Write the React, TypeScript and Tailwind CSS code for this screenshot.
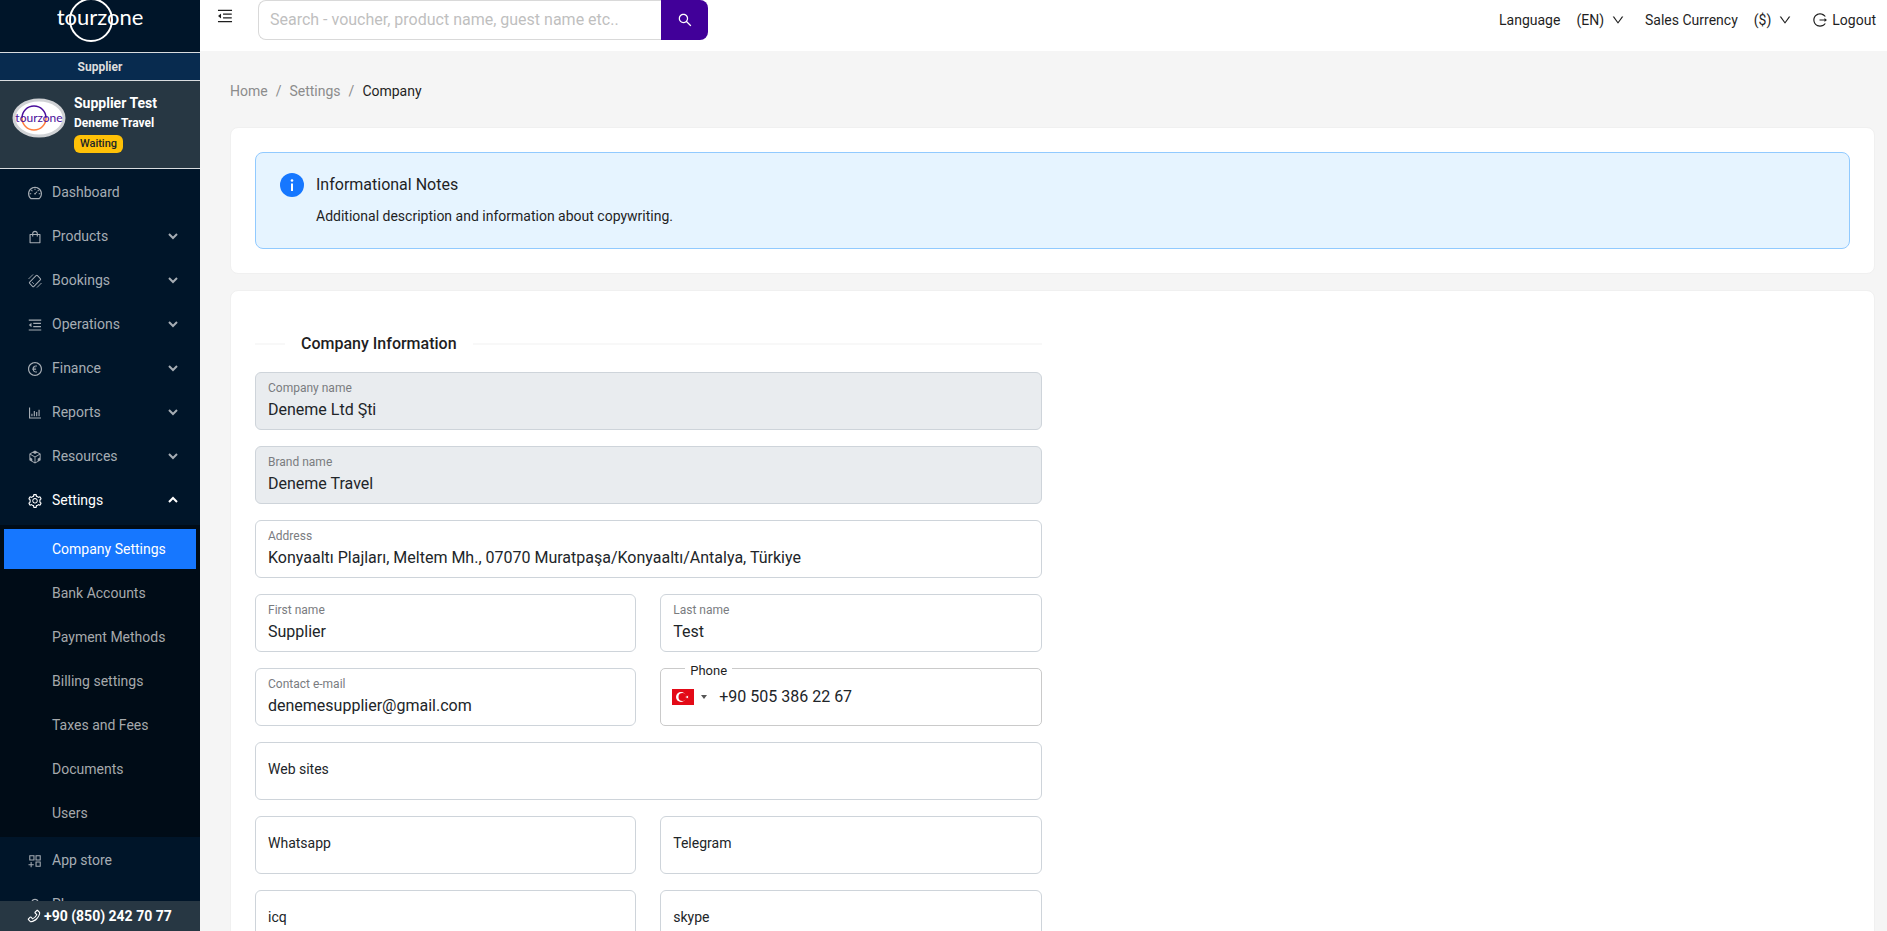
import React from "react";
import {
  AiOutlineAppstoreAdd,
  AiOutlineBarChart,
  AiOutlineCodeSandbox,
  AiOutlineDashboard,
  AiOutlineDown,
  AiOutlineEuroCircle,
  AiOutlineLogout,
  AiOutlineMenuFold,
  AiOutlinePhone,
  AiOutlineSearch,
  AiOutlineSetting,
  AiOutlineShopping,
  AiOutlineUser,
} from "react-icons/ai";
import type { IconType } from "react-icons";

interface MenuEntry {
  label: string;
  icon: IconType;
  expandable?: boolean;
  open?: boolean;
}

interface FieldProps {
  id: string;
  label: string;
  value?: string;
  disabled?: boolean;
  wide?: boolean;
}

const TicketIcon: IconType = ({ className }) => (
  <svg viewBox="0 0 32 32" className={className} fill="none" stroke="currentColor" strokeWidth="2">
    <rect x="5" y="10" width="22" height="12" rx="2" transform="rotate(-45 16 16)" />
    <path d="M3 12q1-1 3-3t3-3 3-3M20 29q1-1 3-3t3-3 3-3" />
    <path d="M10.5 18.5l3 3" />
  </svg>
);

const mainMenu: MenuEntry[] = [
  { label: "Dashboard", icon: AiOutlineDashboard },
  { label: "Products", icon: AiOutlineShopping, expandable: true },
  { label: "Bookings", icon: TicketIcon, expandable: true },
  { label: "Operations", icon: AiOutlineMenuFold, expandable: true },
  { label: "Finance", icon: AiOutlineEuroCircle, expandable: true },
  { label: "Reports", icon: AiOutlineBarChart, expandable: true },
  { label: "Resources", icon: AiOutlineCodeSandbox, expandable: true },
  { label: "Settings", icon: AiOutlineSetting, expandable: true, open: true },
];

const settingsMenu = [
  "Company Settings",
  "Bank Accounts",
  "Payment Methods",
  "Billing settings",
  "Taxes and Fees",
  "Documents",
  "Users",
];

const fields: FieldProps[] = [
  { id: "company", label: "Company name", value: "Deneme Ltd Şti", disabled: true, wide: true },
  { id: "brand", label: "Brand name", value: "Deneme Travel", disabled: true, wide: true },
  {
    id: "address",
    label: "Address",
    value: "Konyaaltı Plajları, Meltem Mh., 07070 Muratpaşa/Konyaaltı/Antalya, Türkiye",
    wide: true,
  },
  { id: "first", label: "First name", value: "Supplier" },
  { id: "last", label: "Last name", value: "Test" },
  { id: "email", label: "Contact e-mail", value: "denemesupplier@gmail.com" },
];

const contactFields: FieldProps[] = [
  { id: "web", label: "Web sites", wide: true },
  { id: "whatsapp", label: "Whatsapp" },
  { id: "telegram", label: "Telegram" },
  { id: "icq", label: "icq" },
  { id: "skype", label: "skype" },
];

const Chevron: React.FC<{ up?: boolean }> = ({ up }) => (
  <svg viewBox="0 0 10 10" className="w-[10px] h-[10px]" fill="none" stroke="currentColor" strokeWidth="2">
    <path d={up ? "M1 7l4-4 4 4" : "M1 3l4 4 4-4"} />
  </svg>
);

const Logo: React.FC = () => (
  <svg viewBox="0 0 86 42" className="w-[86px] h-[42px] shrink-0" role="img" aria-label="tourzone">
    <circle cx="34" cy="20" r="21" fill="none" stroke="#fff" strokeWidth="2" />
    <text x="43" y="25" textAnchor="middle" fontFamily="Lato, sans-serif" fontSize="22" fill="#fff">
      tourzone
    </text>
  </svg>
);

const Avatar: React.FC = () => (
  <svg viewBox="0 0 54 40" className="w-[54px] h-10 shrink-0" role="img" aria-label="tourzone">
    <ellipse cx="27" cy="20" rx="25" ry="18" fill="#fff" stroke="#d0d2d5" strokeWidth="3" />
    <path d="M10 20a12 12 0 0 1 24 0" fill="none" stroke="#4a0f9b" strokeWidth="1.5" />
    <path d="M10 20a12 12 0 0 0 24 0" fill="none" stroke="#ff7f3e" strokeWidth="1.5" />
    <text x="27" y="24" textAnchor="middle" fontFamily="Lato, sans-serif" fontSize="12" fill="#4a0f9b">
      tourzone
    </text>
  </svg>
);

const MenuItem: React.FC<MenuEntry> = ({ label, icon: Icon, expandable, open }) => (
  <button
    type="button"
    className={`flex items-center w-full h-10 my-1 pb-[2px] pl-[27px] pr-[22px] text-sm ${
      open ? "text-white" : "text-[#a6adb4]"
    }`}
  >
    <Icon className="w-4 h-4 mt-[2px] mr-[9px] shrink-0" />
    <span className="flex-1 text-left">{label}</span>
    {expandable && <Chevron up={open} />}
  </button>
);

const Sidebar: React.FC = () => (
  <aside className="flex flex-col w-[200px] shrink-0 bg-[#001529] text-white">
    <div className="flex items-start justify-center h-[52px] shrink-0 overflow-hidden">
      <Logo />
    </div>
    <div className="flex items-center justify-center h-[29px] shrink-0 border-y border-[#d9dcdf] bg-[#082b4f] text-xs font-bold text-[#dddddd]">
      Supplier
    </div>
    <div className="flex gap-2 h-[88px] shrink-0 pt-3 pl-3 bg-[#273743] border-b border-[#d9dcdf]">
      <div className="pt-[5px]">
        <Avatar />
      </div>
      <div>
        <div className="text-sm leading-[20px] font-bold">Supplier Test</div>
        <div className="text-xs leading-[20px] font-bold">Deneme Travel</div>
        <span className="flex items-center justify-center w-[49px] h-[18px] mt-[2px] rounded-[6px] bg-[#ffc107] text-[11px] font-medium text-[#212529]">
          Waiting
        </span>
      </div>
    </div>
    <nav className="flex-1 overflow-hidden">
      {mainMenu.map((entry) => (
        <MenuItem key={entry.label} {...entry} />
      ))}
      <div className="bg-[#000c17] py-1">
        {settingsMenu.map((label, i) => (
          <a
            key={label}
            href="#"
            className={`flex items-center h-10 mx-1 mb-1 last:mb-0 pl-12 pb-px text-sm ${
              i === 0 ? "bg-[#1677ff] text-white" : "text-[#a6a9ac]"
            }`}
          >
            {label}
          </a>
        ))}
      </div>
      <MenuItem label="App store" icon={AiOutlineAppstoreAdd} />
      <MenuItem label="Plans" icon={AiOutlineUser} />
    </nav>
    <a href="#" className="flex items-center gap-[2px] h-[30px] shrink-0 pl-[26px] bg-[#273743] text-sm font-bold">
      <AiOutlinePhone className="w-4 h-4" />
      +90 (850) 242 70 77
    </a>
  </aside>
);

const TopBar: React.FC = () => (
  <header className="flex justify-between h-[51px] shrink-0 bg-white pl-4 pr-[11px]">
    <div className="flex items-start gap-6">
      <button type="button" aria-label="Collapse menu" className="mt-[7px]">
        <AiOutlineMenuFold className="w-[18px] h-[18px]" />
      </button>
      <div className="flex w-[450px] h-10">
        <input
          type="search"
          aria-label="Search"
          placeholder="Search - voucher, product name, guest name etc.."
          className="flex-1 min-w-0 px-[11px] border border-r-0 border-[#d9d9d9] rounded-l-lg text-base placeholder:text-[#bfbfbf]"
        />
        <button
          type="button"
          aria-label="Run search"
          className="flex items-center justify-center w-[47px] rounded-r-lg bg-[#410099] text-white"
        >
          <AiOutlineSearch className="w-4 h-4" />
        </button>
      </div>
    </div>
    <div className="flex items-center h-10 text-sm">
      <span>Language</span>
      <button type="button" className="flex items-center gap-[7px] ml-4 mr-5">
        (EN) <AiOutlineDown className="w-[14px] h-[14px]" />
      </button>
      <span>Sales Currency</span>
      <button type="button" className="flex items-center gap-[7px] ml-4 mr-5">
        ($) <AiOutlineDown className="w-[14px] h-[14px]" />
      </button>
      <button type="button" className="flex items-center gap-1">
        <AiOutlineLogout className="w-4 h-4" /> Logout
      </button>
    </div>
  </header>
);

const Field: React.FC<FieldProps> = ({ id, label, value, disabled, wide }) => (
  <div
    className={`flex flex-col h-[58px] px-3 border border-[#ced4da] rounded-md ${wide ? "col-span-2" : ""} ${
      disabled ? "bg-[#e9ecef]" : "bg-white"
    } ${value ? "pt-[7px]" : "justify-center"}`}
  >
    {value ? (
      <>
        <label htmlFor={id} className="text-xs leading-[16px] text-[#7a7c7f]">
          {label}
        </label>
        <input id={id} defaultValue={value} disabled={disabled} className="h-6 mt-[2px] text-base text-[#212529] bg-transparent" />
      </>
    ) : (
      <input
        id={id}
        aria-label={label}
        placeholder={label}
        className="h-full pb-1 text-sm bg-transparent placeholder:text-[#212529]"
      />
    )}
  </div>
);

const PhoneField: React.FC = () => (
  <div className="relative flex items-center h-[58px] pl-[11px] border border-[#cacaca] rounded-[5px]">
    <label htmlFor="phone" className="absolute -top-[7px] left-6 px-[5px] bg-white text-[13px] leading-[18px]">
      Phone
    </label>
    <button type="button" aria-label="Select country" className="flex items-center gap-[7px] mr-3">
      <svg viewBox="0 0 22 16" className="w-[22px] h-4">
        <rect width="22" height="16" fill="#e30a17" />
        <circle cx="9" cy="8" r="5" fill="#fff" />
        <circle cx="10.5" cy="8" r="4" fill="#e30a17" />
        <path d="M13.2 8l3.2-1.3-1.5 3V6.3l1.5 3z" fill="#fff" />
      </svg>
      <svg viewBox="0 0 6 4" className="w-[6px] h-1">
        <path d="M0 0h6l-3 4z" fill="#555" />
      </svg>
    </button>
    <input id="phone" type="tel" defaultValue="+90 505 386 22 67" className="flex-1 min-w-0 pb-px text-base text-[#212529]" />
  </div>
);

export default function App() {
  return (
    <div className="flex h-screen overflow-hidden bg-[#f5f5f5] font-[Roboto,sans-serif] text-[#1f1f1f]">
      <Sidebar />
      <div className="flex flex-col flex-1 min-w-0">
        <TopBar />
        <main className="flex-1 overflow-hidden pl-[30px] pr-3">
          <nav aria-label="Breadcrumb" className="flex gap-2 pt-[29px] pb-[25px] text-sm leading-[22px] text-[#8c8c8c]">
            <a href="#">Home</a>
            <span>/</span>
            <a href="#">Settings</a>
            <span>/</span>
            <span className="text-[#1f1f1f]">Company</span>
          </nav>

          <section className="p-6 mb-4 bg-white border border-[#f0f0f0] rounded-lg">
            <div className="flex gap-3 h-[97px] px-6 pt-5 bg-[#e6f4ff] border border-[#91caff] rounded-lg">
              <span className="flex items-center justify-center w-6 h-6 rounded-full bg-[#1677ff] shrink-0">
                <svg viewBox="0 0 24 24" className="w-6 h-6" fill="#fff">
                  <circle cx="12" cy="7.5" r="1.3" />
                  <rect x="11" y="10.5" width="2" height="7.5" />
                </svg>
              </span>
              <div>
                <h2 className="text-base leading-[24px] mb-2">Informational Notes</h2>
                <p className="text-sm leading-[22px]">Additional description and information about copywriting.</p>
              </div>
            </div>
          </section>

          <section className="px-6 pt-[41px] pb-6 bg-white border border-[#f0f0f0] rounded-lg">
            <div className="w-1/2 pr-[11px]">
              <div className="flex items-center gap-4 mb-4">
                <span className="w-[30px] h-[2px] bg-[#f8f8f8]" />
                <h1 className="text-base leading-[24px] font-medium">Company Information</h1>
                <span className="flex-1 h-[2px] bg-[#f8f8f8]" />
              </div>
              <form className="grid grid-cols-2 gap-x-6 gap-y-4">
                {fields.map((field) => (
                  <Field key={field.id} {...field} />
                ))}
                <PhoneField />
                {contactFields.map((field) => (
                  <Field key={field.id} {...field} />
                ))}
              </form>
            </div>
          </section>
        </main>
      </div>
    </div>
  );
}
